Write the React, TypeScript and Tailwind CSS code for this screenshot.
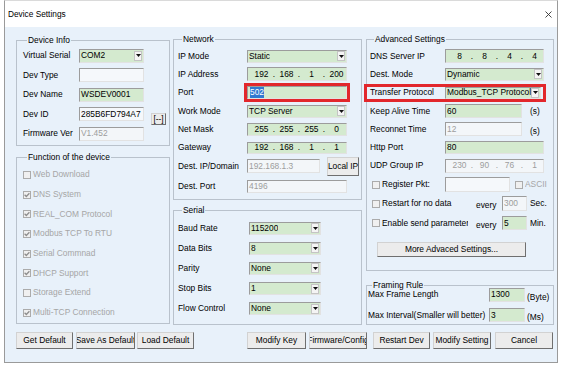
import React from "react";

type Tone = "green" | "light" | "disabled";

const toneClass: Record<Tone, string> = {
  green: "bg-[#d4eacf] text-black",
  light: "bg-[#f5f8fb] text-black",
  disabled: "bg-[#f3f6f9] text-[#9d9d9d]",
};

function Field({
  w,
  h = "h-[14px]",
  tone = "green",
  className = "",
  children,
}: {
  w: string;
  h?: string;
  tone?: Tone;
  className?: string;
  children?: React.ReactNode;
}) {
  return (
    <div
      className={`flex shrink-0 items-center overflow-hidden whitespace-nowrap border border-t-[#9c9c9c] border-l-[#9c9c9c] border-r-[#e2e2e2] border-b-[#e2e2e2] pl-[1px] ${toneClass[tone]} ${w} ${h} ${className}`}
    >
      {children}
    </div>
  );
}

function Arrow() {
  return (
    <div className="ml-auto mr-[1px] flex h-[10px] w-[8px] shrink-0 items-center justify-center border border-[#c4c4c4] bg-[#f4f4f4]">
      <svg width="5" height="3" viewBox="0 0 5 3">
        <path d="M0 0H5L2.5 3Z" fill="#111" />
      </svg>
    </div>
  );
}

function Select({ w, h = "h-[13px]", value }: { w: string; h?: string; value: string }) {
  return (
    <Field w={w} h={h}>
      <span className="overflow-hidden">{value}</span>
      <Arrow />
    </Field>
  );
}

function Ip({ parts }: { parts: string[] }) {
  return (
    <div className="flex items-center pl-[4px]">
      {parts.map((p, i) => (
        <React.Fragment key={i}>
          {i > 0 && <span className="w-[8px] text-center">.</span>}
          <span className="w-[17px] text-center">{p}</span>
        </React.Fragment>
      ))}
    </div>
  );
}

function Check({ checked = false, className = "" }: { checked?: boolean; className?: string }) {
  return (
    <div
      className={`flex h-[8px] w-[8px] shrink-0 items-center justify-center border border-[#ababab] bg-[#f0f0f0] ${className}`}
    >
      {checked && (
        <svg width="6" height="6" viewBox="0 0 6 6">
          <path d="M0.6 2.8L2.3 4.5L5.4 1.2" stroke="#8e8e8e" strokeWidth="1.3" fill="none" />
        </svg>
      )}
    </div>
  );
}

function Btn({
  w,
  h = "h-[17px]",
  className = "",
  children,
}: {
  w: string;
  h?: string;
  className?: string;
  children: React.ReactNode;
}) {
  return (
    <div
      className={`flex shrink-0 items-center justify-center overflow-hidden whitespace-nowrap border border-t-[#d2d2d2] border-l-[#d2d2d2] border-r-[#6f6f6f] border-b-[#6f6f6f] bg-[#ececec] ${w} ${h} ${className}`}
    >
      {children}
    </div>
  );
}

function Group({
  title,
  className = "",
  children,
}: {
  title: string;
  className?: string;
  children: React.ReactNode;
}) {
  return (
    <fieldset className={`m-0 min-w-0 shrink-0 border border-[#b9c2cc] p-0 ${className}`}>
      <legend className="ml-[4px] px-[1px] leading-[11px]">{title}</legend>
      {children}
    </fieldset>
  );
}

function Row({ h, className = "", children }: { h: string; className?: string; children: React.ReactNode }) {
  return <div className={`flex shrink-0 items-center whitespace-nowrap ${h} ${className}`}>{children}</div>;
}

export default function App() {
  const functions: [string, boolean][] = [
    ["Web Download", false],
    ["DNS System", true],
    ["REAL_COM Protocol", true],
    ["Modbus TCP To RTU", true],
    ["Serial Commnad", true],
    ["DHCP Support", true],
    ["Storage Extend", false],
    ["Multi-TCP Connection", true],
  ];

  return (
    <div className="h-[369px] w-[564px] bg-white font-['Liberation_Sans',Arial,sans-serif] text-[8.4px] leading-[11px] text-black">
      <div className="ml-[4px] flex h-[363px] w-[554px] flex-col border border-[#9a9a9a] border-t-[#dadada]">
        {/* Title bar */}
        <div className="flex h-[26px] shrink-0 items-center justify-between bg-white pl-[3px] pr-[5px]">
          <span className="text-[8.3px]">Device Settings</span>
          <svg width="7" height="7" viewBox="0 0 7 7">
            <path d="M0.5 0.5L6.5 6.5M6.5 0.5L0.5 6.5" stroke="#333" strokeWidth="0.9" />
          </svg>
        </div>

        {/* Body */}
        <div className="flex flex-1 flex-col bg-[#e8f1fa] pl-[11px]">
          <div className="flex items-start">
            {/* Column 1 */}
            <div className="flex w-[154px] shrink-0 flex-col">
              <Group title="Device Info" className="mt-[8px] h-[111px] w-[154px] pl-[6px]">
                <Row h="h-[19.5px]">
                  <span className="w-[56px] shrink-0">Virtual Serial</span>
                  <Select w="w-[65px]" h="h-[14px]" value="COM2" />
                </Row>
                <Row h="h-[19.5px]">
                  <span className="w-[56px] shrink-0">Dev Type</span>
                  <Field w="w-[65px]" tone="light" />
                </Row>
                <Row h="h-[19.5px]">
                  <span className="w-[56px] shrink-0">Dev Name</span>
                  <Field w="w-[65px]">WSDEV0001</Field>
                </Row>
                <Row h="h-[19.5px]">
                  <span className="w-[56px] shrink-0">Dev ID</span>
                  <Field w="w-[65px]" tone="light">
                    285B6FD794A7
                  </Field>
                  <Btn w="w-[15px]" h="h-[12px]" className="ml-[7px] mt-[10px]">
                    [--]
                  </Btn>
                </Row>
                <Row h="h-[19.5px]">
                  <span className="w-[56px] shrink-0">Firmware Ver</span>
                  <Field w="w-[65px]" tone="disabled">
                    V1.452
                  </Field>
                </Row>
              </Group>

              <Group title="Function of the device" className="mt-[6px] h-[172px] w-[154px] pl-[6px] pt-[2px]">
                {functions.map(([name, on]) => (
                  <Row key={name} h="h-[19.7px]" className="gap-[2px] text-[#a6a6a6]">
                    <Check checked={on} />
                    <span>{name}</span>
                  </Row>
                ))}
              </Group>
            </div>

            {/* Column 2 */}
            <div className="ml-[3px] flex w-[189px] shrink-0 flex-col">
              <Group title="Network" className="mt-[7px] h-[166px] w-[189px] pl-[4px] pt-[2px]">
                <Row h="h-[18.3px]">
                  <span className="w-[69px] shrink-0">IP Mode</span>
                  <Select w="w-[100px]" value="Static" />
                </Row>
                <Row h="h-[18.3px]">
                  <span className="w-[69px] shrink-0">IP Address</span>
                  <Field w="w-[100px]">
                    <Ip parts={["192", "168", "1", "200"]} />
                  </Field>
                </Row>
                <Row h="h-[18.3px]">
                  <span className="w-[66px] shrink-0">Port</span>
                  <div className="flex shrink-0 border-[3px] border-[#e2272c]">
                    <Field w="w-[100px]" h="h-[13px]" className="pl-[2px]">
                      <span className="bg-[#3179d1] text-white">502</span>
                    </Field>
                  </div>
                </Row>
                <Row h="h-[18.3px]">
                  <span className="w-[69px] shrink-0">Work Mode</span>
                  <Select w="w-[100px]" value="TCP Server" />
                </Row>
                <Row h="h-[18.3px]">
                  <span className="w-[69px] shrink-0">Net Mask</span>
                  <Field w="w-[100px]" h="h-[13px]">
                    <Ip parts={["255", "255", "255", "0"]} />
                  </Field>
                </Row>
                <Row h="h-[18.3px]">
                  <span className="w-[69px] shrink-0">Gateway</span>
                  <Field w="w-[100px]" h="h-[12px]">
                    <Ip parts={["192", "168", "1", "1"]} />
                  </Field>
                </Row>
                <Row h="h-[19.4px]">
                  <span className="w-[69px] shrink-0">Dest. IP/Domain</span>
                  <Field w="w-[73px]" tone="disabled">
                    192.168.1.3
                  </Field>
                  <Btn w="w-[32px]" h="h-[19px]" className="ml-[7px]">
                    Local IP
                  </Btn>
                </Row>
                <Row h="h-[20.6px]">
                  <span className="w-[69px] shrink-0">Dest. Port</span>
                  <Field w="w-[100px]" h="h-[13px]" tone="disabled">
                    4196
                  </Field>
                </Row>
              </Group>

              <Group title="Serial" className="mt-[5px] h-[120px] w-[189px] pl-[4px] pt-[2px]">
                {[
                  ["Baud Rate", "115200"],
                  ["Data Bits", "8"],
                  ["Parity", "None"],
                  ["Stop Bits", "1"],
                  ["Flow Control", "None"],
                ].map(([l, v]) => (
                  <Row key={l} h="h-[20.2px]">
                    <span className="w-[71px] shrink-0">{l}</span>
                    <Select w="w-[72px]" value={v} />
                  </Row>
                ))}
              </Group>
            </div>

            {/* Column 3 */}
            <div className="ml-[4px] flex w-[188px] shrink-0 flex-col">
              <Group title="Advanced Settings" className="mt-[7px] h-[237px] w-[188px] pl-[3px] pt-[2px]">
                <Row h="h-[18.3px]">
                  <span className="w-[75px] shrink-0">DNS Server IP</span>
                  <Field w="w-[99px]">
                    <Ip parts={["8", "8", "4", "4"]} />
                  </Field>
                </Row>
                <Row h="h-[18.3px]">
                  <span className="w-[75px] shrink-0">Dest. Mode</span>
                  <Select w="w-[99px]" value="Dynamic" />
                </Row>
                <Row h="h-[18.3px]">
                  <div className="-ml-[6px] flex h-[18px] w-[182px] shrink-0 items-center border-[3px] border-[#e2272c] pl-[3px]">
                    <span className="w-[75px] shrink-0">Transfer Protocol</span>
                    <Select w="w-[96px]" h="h-[12px]" value="Modbus_TCP Protocol" />
                  </div>
                </Row>
                <Row h="h-[18.3px]">
                  <span className="w-[75px] shrink-0">Keep Alive Time</span>
                  <Field w="w-[77px]">60</Field>
                  <span className="ml-[8px]">(s)</span>
                </Row>
                <Row h="h-[18.3px]">
                  <span className="w-[75px] shrink-0">Reconnet Time</span>
                  <Field w="w-[77px]" tone="disabled">
                    12
                  </Field>
                  <span className="ml-[8px] mt-[5px]">(s)</span>
                </Row>
                <Row h="h-[18.3px]">
                  <span className="w-[75px] shrink-0">Http Port</span>
                  <Field w="w-[99px]" h="h-[13px]">
                    80
                  </Field>
                </Row>
                <Row h="h-[18.3px]">
                  <span className="w-[75px] shrink-0">UDP Group IP</span>
                  <Field w="w-[99px]" tone="disabled">
                    <Ip parts={["230", "90", "76", "1"]} />
                  </Field>
                </Row>
                <Row h="h-[19px]">
                  <Check className="ml-[2px]" />
                  <span className="ml-[2px] w-[63px] shrink-0">Register Pkt:</span>
                  <Field w="w-[65px]" h="h-[15px]" tone="light" />
                  <Check className="ml-[5px]" />
                  <span className="ml-[2px] w-[23px] shrink-0 overflow-hidden text-[#a6a6a6]">ASCII</span>
                </Row>
                <Row h="h-[19.4px]">
                  <Check className="ml-[2px]" />
                  <span className="ml-[2px] w-[94px] shrink-0">Restart for no data</span>
                  <span className="mt-[4px] w-[26px] shrink-0">every</span>
                  <Field w="w-[25px]" h="h-[15px]" tone="disabled">
                    300
                  </Field>
                  <span className="ml-[3px]">Sec.</span>
                </Row>
                <Row h="h-[19.4px]">
                  <Check className="ml-[2px]" />
                  <span className="ml-[2px] w-[86px] shrink-0 overflow-hidden">Enable send parameter</span>
                  <span className="ml-[8px] mt-[4px] w-[26px] shrink-0">every</span>
                  <Field w="w-[25px]" h="h-[14px]">
                    5
                  </Field>
                  <span className="ml-[3px]">Min.</span>
                </Row>
                <Row h="h-[33px]">
                  <Btn w="w-[149px]" h="h-[15px]" className="ml-[7px]">
                    More Advaced Settings...
                  </Btn>
                </Row>
              </Group>

              <Group title="Framing Rule" className="mt-[9px] h-[45px] w-[188px] pl-[1px]">
                <Row h="h-[21px]" className="-mt-[7px]">
                  <span className="w-[121px] shrink-0">Max Frame Length</span>
                  <Field w="w-[36px]">1300</Field>
                  <span className="ml-[2px] mt-[6px] w-[26px] shrink-0 overflow-hidden">(Byte)</span>
                </Row>
                <Row h="h-[20px]">
                  <span className="w-[121px] shrink-0">Max Interval(Smaller will better)</span>
                  <Field w="w-[36px]">3</Field>
                  <span className="ml-[2px] mt-[4px] w-[26px] shrink-0 overflow-hidden">(Ms)</span>
                </Row>
              </Group>
            </div>
          </div>

          {/* Bottom buttons */}
          <div className="mt-[7px] flex">
            <Btn w="w-[57px]">Get Default</Btn>
            <Btn w="w-[59px]" className="ml-[3px]">
              Save As Default
            </Btn>
            <Btn w="w-[57px]" className="ml-[2px]">
              Load Default
            </Btn>
            <Btn w="w-[59px]" className="ml-[53px]">
              Modify Key
            </Btn>
            <Btn w="w-[58px]" className="ml-[3px]">
              Firmware/Config
            </Btn>
            <Btn w="w-[57px]" className="ml-[6px]">
              Restart Dev
            </Btn>
            <Btn w="w-[58px]" className="ml-[3px]">
              Modify Setting
            </Btn>
            <Btn w="w-[58px]" className="ml-[4px]">
              Cancel
            </Btn>
          </div>
        </div>
      </div>
    </div>
  );
}
